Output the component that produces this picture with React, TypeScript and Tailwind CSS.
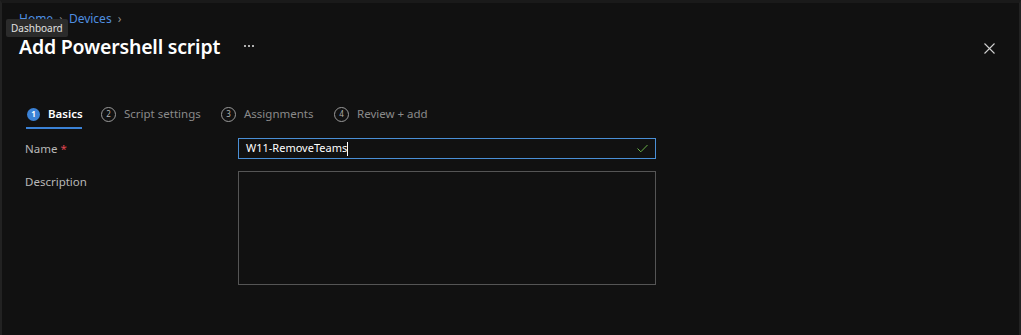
import React from "react";

const font = { fontFamily: '"Noto Sans", "Open Sans", Arial, sans-serif' };

function Step({ n, label, active, w }: { n: number; label: string; active?: boolean; w: string }) {
  return (
    <div className={"relative flex items-center h-[28px] " + w}>
      {active ? (
        <span className="ml-[2px] flex items-center justify-center w-[13px] h-[13px] rounded-full bg-[#3b82d6] text-white text-[8px] font-bold leading-none">
          {n}
        </span>
      ) : (
        <span className="flex items-center justify-center w-[15px] h-[15px] rounded-full border border-[#9a9a9a] text-[#b0b0b0] text-[8px] leading-none">
          {n}
        </span>
      )}
      <span
        className={
          active
            ? "ml-[8px] text-[11.5px] font-semibold text-white whitespace-nowrap"
            : "ml-[8px] text-[11.5px] text-[#8a8a8a] whitespace-nowrap"
        }
      >
        {label}
      </span>
      {active && <div className="absolute left-[1px] w-[56px] bottom-[-1px] h-[2px] bg-[#3b82d6]" />}
    </div>
  );
}

export default function App() {
  return (
    <div
      className="w-[1021px] h-[335px] bg-[#111111] border-l-2 border-r-2 border-[#222222] border-t-[3px] border-t-[#1a1a1a] overflow-hidden relative"
      style={font}
    >
      <div className="pl-[17px] pt-[8px] flex items-center gap-[6px] text-[12px] text-[#4f8fe0] leading-[16px]">
        <span>Home</span>
        <span className="text-[#8a8a8a]">›</span>
        <span>Devices</span>
        <span className="text-[#8a8a8a]">›</span>
      </div>
      <div className="absolute left-[4px] top-[16px] px-[5px] py-[2px] bg-[#2b2b2b] rounded-[2px] text-[10px] text-[#e0e0e0] leading-[14px]">
        Dashboard
      </div>
      <div className="flex items-center pl-[17px] pr-[24px] mt-[7px] h-[26px]">
        <h1 className="text-[19.5px] font-semibold text-white leading-[26px] tracking-[-0.2px]">Add Powershell script</h1>
        <div className="ml-[24px] flex gap-[2px] mt-[-2px]">
          <span className="w-[2px] h-[2px] bg-[#b0b0b0]" />
          <span className="w-[2px] h-[2px] bg-[#b0b0b0]" />
          <span className="w-[2px] h-[2px] bg-[#b0b0b0]" />
        </div>
        <div className="flex-1" />
        <svg width="11" height="11" viewBox="0 0 11 11" className="mt-[2px]">
          <path d="M0.5 0.5 L10.5 10.5 M10.5 0.5 L0.5 10.5" stroke="#d0d0d0" strokeWidth="1.1" />
        </svg>
      </div>
      <div className="flex items-center pl-[23px] mt-[40px]">
        <Step n={1} label="Basics" active w="w-[76px]" />
        <Step n={2} label="Script settings" w="w-[120px]" />
        <Step n={3} label="Assignments" w="w-[113px]" />
        <Step n={4} label="Review + add" w="w-[100px]" />
      </div>
      <div className="pl-[23px] mt-[10px] flex flex-col gap-[12px]">
        <div className="flex items-center">
          <div className="w-[213px] text-[11.5px] text-[#b8b8b8]">
            Name <span className="text-[#e0454f]">*</span>
          </div>
          <div className="w-[418px] h-[21px] border border-[#4a8fd6] flex items-center pl-[7px] pr-[7px]">
            <span className="text-[11px] text-white">W11-RemoveTeams</span>
            <span className="w-px h-[14px] bg-white" />
            <div className="flex-1" />
            <svg width="11" height="9" viewBox="0 0 11 9">
              <path d="M0.5 4.5 L3.8 7.8 L10.5 1" stroke="#6bb24a" strokeWidth="1" fill="none" />
            </svg>
          </div>
        </div>
        <div className="flex items-start">
          <div className="w-[213px] text-[11.5px] text-[#b8b8b8] mt-[2px]">Description</div>
          <div className="w-[418px] h-[114px] border border-[#555555]" />
        </div>
      </div>
    </div>
  );
}
